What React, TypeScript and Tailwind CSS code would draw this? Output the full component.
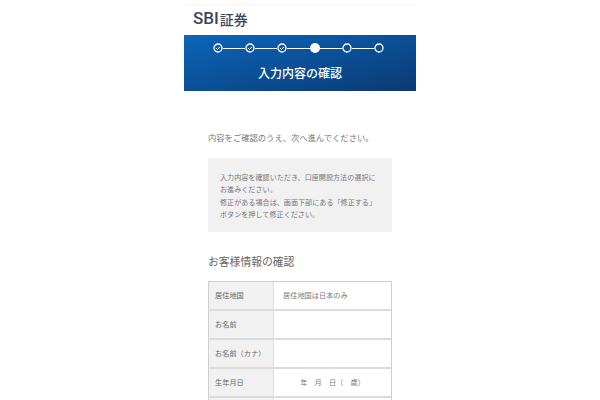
const font = { fontFamily: '"Noto Sans CJK JP", "Liberation Sans", sans-serif' };

const steps = ["done", "done", "done", "current", "todo", "todo"];

function Step({ state }: { state: string }) {
  if (state === "current") {
    return <div className="h-[10px] w-[10px] rounded-full bg-white" />;
  }
  return (
    <svg width="10" height="10" viewBox="0 0 10 10" fill="none" stroke="white">
      <circle cx="5" cy="5" r="4" strokeWidth="1.3" />
      {state === "done" && <path d="M3 5.1 4.5 6.5 7 3.8" strokeWidth="1" />}
    </svg>
  );
}

function Row({ label, value, center }: { label: string; value?: string; center?: boolean }) {
  return (
    <div className="flex h-[29px] border-b-2 border-[#dcdcdc]">
      <div className="flex w-[65px] items-center whitespace-nowrap border-r border-[#dcdcdc] bg-[#f1f1f1] pl-[6px] text-[7.2px] text-[#666]">
        {label}
      </div>
      <div className={`flex flex-1 items-center whitespace-nowrap text-[7.2px] text-[#777] ${center ? "justify-center" : "pl-[9px]"}`}>
        {value}
      </div>
    </div>
  );
}

export default function App() {
  return (
    <div className="h-[400px] w-[600px] overflow-hidden bg-white" style={font}>
      <div className="mx-auto w-[232px]">
        <div className="mt-[4px] flex h-[31px] items-center border-t border-[#f3f3f3] pb-[3px] pl-[9px]">
          <span className="text-[17px] font-medium leading-none text-[#3a4660]" style={{ fontFamily: 'Roboto, sans-serif' }}>
            SBI
          </span>
          <span className="ml-px text-[14px] font-medium leading-none text-[#3a4660]">証券</span>
        </div>

        <div className="flex h-[56px] flex-col items-center bg-gradient-to-br from-[#0a66bb] to-[#0a3a74] pt-[8px]">
          <div className="mr-[3px] flex items-center">
            {steps.map((s, i) => (
              <div key={i} className="flex items-center">
                {i > 0 && <div className="h-px w-[22.4px] bg-white" />}
                <Step state={s} />
              </div>
            ))}
          </div>
          <div className="mt-[12px] text-[12px] font-medium leading-[16px] text-white">入力内容の確認</div>
        </div>

        <div className="px-[24px]">
          <p className="mt-[39px] whitespace-nowrap text-[8.3px] leading-[14px] text-[#777]">内容をご確認のうえ、次へ進んでください。</p>

          <div className="mt-[14px] h-[74px] whitespace-nowrap bg-[#f1f1f2] px-[12px] pt-[13px] text-[7.1px] leading-[12.4px] text-[#777]">
            <p>入力内容を確認いただき、口座開設方法の選択に</p>
            <p>お進みください。</p>
            <p>修正がある場合は、画面下部にある「修正する」</p>
            <p>ボタンを押して修正ください。</p>
          </div>

          <h2 className="mt-[20px] text-[10.8px] font-normal leading-[18px] text-[#666]">お客様情報の確認</h2>

          <div className="mt-[11px] border-x border-t border-[#cfcfcf]">
            <Row label="居住地国" value="居住地国は日本のみ" />
            <Row label="お名前" />
            <Row label="お名前（カナ）" />
            <Row label="生年月日" value="年　月　日（　歳）" center />
            <Row label="" />
          </div>
        </div>
      </div>
    </div>
  );
}
